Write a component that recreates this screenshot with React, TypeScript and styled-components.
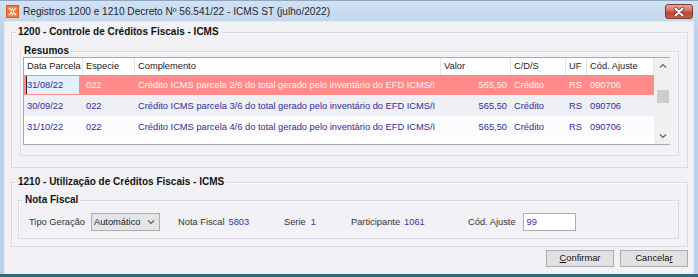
import React from 'react';
import styled, { createGlobalStyle } from 'styled-components';

const GlobalStyle = createGlobalStyle`
  html, body { margin: 0; padding: 0; background: #f1f1f6; }
  body { font-family: "Liberation Sans", Arial, sans-serif; font-size: 9.3px; color: #222; }
  * { box-sizing: border-box; }
`;

const Window = styled.div`
  width: 698px;
  height: 277px;
  display: flex;
  flex-direction: column;
  background: linear-gradient(#d3e2f3, #bdd3eb 30px, #bcd2ea);
  border-bottom: 3px solid #2c6b80;
`;

const TitleBar = styled.div`
  height: 21px;
  flex: none;
  display: flex;
  align-items: center;
  padding: 0 5px 0 6px;
  border-top: 1px solid #8ea6c0;
`;

const TitleText = styled.span`
  margin-left: 4px;
  font-size: 10.1px;
  color: #1b2838;
  flex: 1;
`;

const CloseButton = styled.div`
  width: 28px;
  height: 15px;
  margin-top: 1px;
  border: 1px solid #7c3c35;
  border-radius: 3px;
  background: linear-gradient(#e8a99e, #d4705f 45%, #c0442f 55%, #cc5a45);
  display: flex;
  align-items: center;
  justify-content: center;
`;

const Body = styled.div`
  flex: 1;
  margin: 0 4px;
  background: #f1f1f6;
  border: 1px solid #e2e8f0;
  border-bottom: none;
  padding: 3px 5px 0 6px;
  display: flex;
  flex-direction: column;
`;

const Group = styled.fieldset<{ $top?: number }>`
  margin: ${p => p.$top || 0}px 0 0 0;
  padding: 0;
  min-width: 0;
  border: 1px solid #d9d9df;
  box-shadow: inset 1px 1px 0 #fbfbfd;
`;

const Legend = styled.legend<{ $indent: number }>`
  margin-left: ${p => p.$indent}px;
  padding: 0 2px;
  font-weight: bold;
  font-size: 10px;
  line-height: 14px;
  color: #111;
`;

const GroupBody = styled.div<{ $pad: string }>`
  padding: ${p => p.$pad};
`;

const Grid = styled.div`
  display: flex;
  height: 88px;
  border: 1px solid #a9a9ae;
  background: #fff;
  margin-top: -1px;
`;

const Table = styled.div`
  flex: 1;
  display: flex;
  flex-direction: column;
`;

const cols = '59px 52px 306px 70px 55px 21px 67px';

const HeaderRow = styled.div`
  display: grid;
  grid-template-columns: ${cols};
  height: 17px;
  background: #fff;
`;

const HeaderCell = styled.div`
  padding-left: 3px;
  line-height: 17px;
  color: #1a1a1a;
  border-right: 1px solid #e4e4e8;
  white-space: nowrap;
  overflow: hidden;
`;

const Row = styled.div<{ $bg: string; $color: string; $h: number }>`
  display: grid;
  grid-template-columns: ${cols};
  height: ${p => p.$h}px;
  background: ${p => p.$bg};
  color: ${p => p.$color};
  align-items: center;
`;

const Cell = styled.div<{ $right?: boolean }>`
  padding: 0 4px 0 3px;
  text-align: ${p => (p.$right ? 'right' : 'left')};
  white-space: nowrap;
  overflow: hidden;
`;

const FocusCell = styled.div`
  margin: 0 4px 0 2px;
  height: 18px;
  line-height: 18px;
  background: #e3effb;
  color: #2e2e9c;
  border-left: 1px solid #222;
  white-space: nowrap;
`;

const ScrollBar = styled.div`
  width: 17px;
  flex: none;
  background: #f0f0f0;
  display: flex;
  flex-direction: column;
  align-items: center;
  padding: 5px 0;
`;

const Thumb = styled.div`
  width: 12px;
  height: 13px;
  background: #cdcdcd;
  margin-top: 22px;
`;

const Spacer = styled.div`
  flex: 1;
`;

const FieldRow = styled.div`
  display: flex;
  align-items: center;
  height: 18px;
`;

const Field = styled.div<{ $w?: number }>`
  display: flex;
  align-items: center;
  width: ${p => (p.$w ? `${p.$w}px` : 'auto')};
  flex: none;
`;

const Label = styled.span<{ $gap: number }>`
  color: #333;
  margin-right: ${p => p.$gap}px;
`;

const Value = styled.span`
  color: #3535b0;
`;

const Select = styled.div`
  width: 69px;
  height: 18px;
  border: 1px solid #acacac;
  background: #e5e5e5;
  display: flex;
  align-items: center;
  justify-content: space-between;
  padding: 0 4px 0 2px;
  color: #222;
`;

const Input = styled.div`
  width: 53px;
  height: 18px;
  border: 1px solid #abadb3;
  background: #fff;
  padding-left: 3px;
  line-height: 16px;
  color: #3535b0;
`;

const ButtonRow = styled.div`
  display: flex;
  justify-content: flex-end;
  gap: 6px;
  margin-top: 3px;
`;

const Button = styled.div`
  width: 68px;
  height: 17px;
  border: 1px solid #adadad;
  background: #e1e1e1;
  text-align: center;
  line-height: 15px;
  color: #111;
`;

const Chevron = ({ up }: { up?: boolean }) => (
  <svg width="8" height="5" viewBox="0 0 8 5">
    <path d={up ? 'M1 4.5 L4 1.5 L7 4.5' : 'M1 0.5 L4 3.5 L7 0.5'} fill="none" stroke="#606060" strokeWidth="1.2" />
  </svg>
);

const AppIcon = () => (
  <svg width="13" height="13" viewBox="0 0 13 13">
    <rect x="0" y="0" width="13" height="13" fill="#f0793c" />
    <rect x="0.5" y="0.5" width="12" height="12" fill="none" stroke="#d85a22" />
    <path d="M3 3 L6 6 M10 3 L7 6 M3 10 L6 7 M10 10 L7 7 M6.5 2.5 V4.5 M6.5 8.5 V10.5" stroke="#fff3e0" strokeWidth="1.3" />
  </svg>
);

const CloseGlyph = () => (
  <svg width="12" height="10" viewBox="0 0 12 10">
    <path d="M2.5 1.5 L9.5 8.5 M9.5 1.5 L2.5 8.5" stroke="#6b3a33" strokeWidth="3.4" strokeLinecap="round" />
    <path d="M2.5 1.5 L9.5 8.5 M9.5 1.5 L2.5 8.5" stroke="#fff" strokeWidth="2" strokeLinecap="round" />
  </svg>
);

const rows = [
  { data: '31/08/22', parcela: '2/6' },
  { data: '30/09/22', parcela: '3/6' },
  { data: '31/10/22', parcela: '4/6' },
];

export default function App() {
  return (
    <>
      <GlobalStyle />
      <Window>
        <TitleBar>
          <AppIcon />
          <TitleText>Registros 1200 e 1210 Decreto Nº 56.541/22 - ICMS ST (julho/2022)</TitleText>
          <CloseButton>
            <CloseGlyph />
          </CloseButton>
        </TitleBar>
        <Body>
          <Group>
            <Legend $indent={4}>1200 - Controle de Créditos Fiscais - ICMS</Legend>
            <GroupBody $pad="5px 8px 11px 8px">
              <Group>
                <Legend $indent={1}>Resumos</Legend>
                <GroupBody $pad="0 8px 10px 2px">
                  <Grid>
                    <Table>
                      <HeaderRow>
                        <HeaderCell>Data Parcela</HeaderCell>
                        <HeaderCell>Especie</HeaderCell>
                        <HeaderCell>Complemento</HeaderCell>
                        <HeaderCell>Valor</HeaderCell>
                        <HeaderCell>C/D/S</HeaderCell>
                        <HeaderCell>UF</HeaderCell>
                        <HeaderCell>Cód. Ajuste</HeaderCell>
                      </HeaderRow>
                      {rows.map((r, i) => {
                        const sel = i === 0;
                        return (
                          <Row
                            key={r.data}
                            $h={i === 0 ? 20 : 21}
                            $bg={sel ? '#fe8a8a' : i === 1 ? '#efeff6' : '#fbfbfd'}
                            $color={sel ? '#fff0f0' : '#2e2e9c'}
                          >
                            {sel ? <FocusCell>{r.data}</FocusCell> : <Cell>{r.data}</Cell>}
                            <Cell>022</Cell>
                            <Cell>Crédito ICMS parcela {r.parcela} do total gerado pelo inventário do EFD ICMS/I</Cell>
                            <Cell $right>565,50</Cell>
                            <Cell>Crédito</Cell>
                            <Cell>RS</Cell>
                            <Cell>090706</Cell>
                          </Row>
                        );
                      })}
                    </Table>
                    <ScrollBar>
                      <Chevron up />
                      <Thumb />
                      <Spacer />
                      <Chevron />
                    </ScrollBar>
                  </Grid>
                </GroupBody>
              </Group>
            </GroupBody>
          </Group>
          <Group $top={7}>
            <Legend $indent={4}>1210 - Utilização de Créditos Fiscais - ICMS</Legend>
            <GroupBody $pad="4px 8px 7px 6px">
              <Group>
                <Legend $indent={4}>Nota Fiscal</Legend>
                <GroupBody $pad="6px 8px 7px 10px">
                  <FieldRow>
                    <Field $w={149}>
                      <Label $gap={6}>Tipo Geração</Label>
                      <Select>
                        <span>Automático</span>
                        <Chevron />
                      </Select>
                    </Field>
                    <Field $w={106}>
                      <Label $gap={4}>Nota Fiscal</Label>
                      <Value>5803</Value>
                    </Field>
                    <Field $w={67}>
                      <Label $gap={5}>Serie</Label>
                      <Value>1</Value>
                    </Field>
                    <Field $w={117}>
                      <Label $gap={4}>Participante</Label>
                      <Value>1061</Value>
                    </Field>
                    <Field>
                      <Label $gap={7}>Cód. Ajuste</Label>
                      <Input>99</Input>
                    </Field>
                  </FieldRow>
                </GroupBody>
              </Group>
            </GroupBody>
          </Group>
          <ButtonRow>
            <Button>
              <u>C</u>onfirmar
            </Button>
            <Button>
              Cancela<u>r</u>
            </Button>
          </ButtonRow>
        </Body>
      </Window>
    </>
  );
}
